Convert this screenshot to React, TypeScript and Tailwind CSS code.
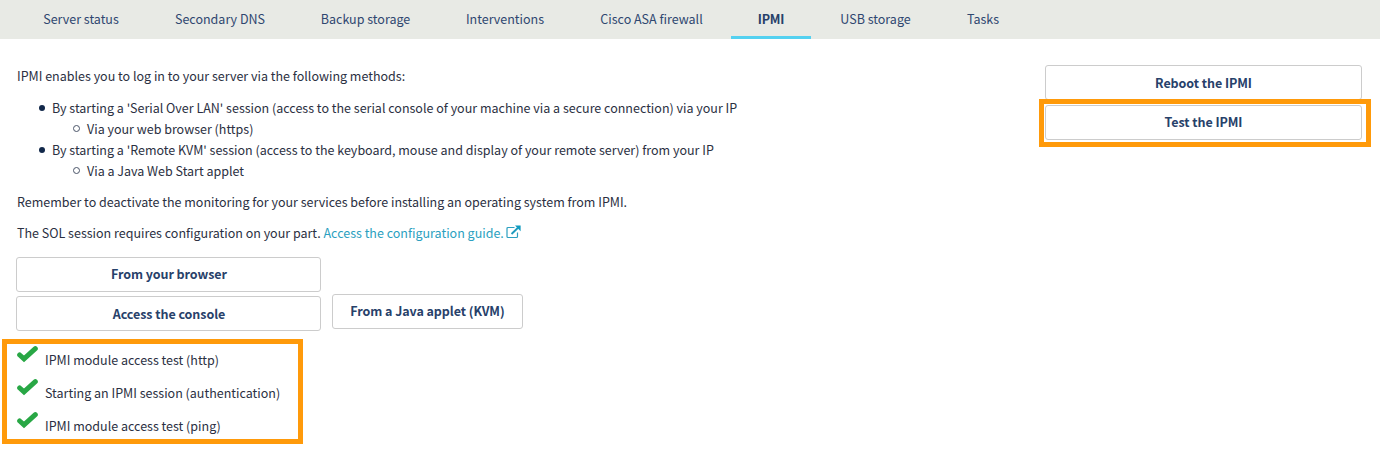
import type { ReactNode } from 'react';

const tabs = [
  { label: 'Server status', width: 'w-[132px]' },
  { label: 'Secondary DNS', width: 'w-[146px]' },
  { label: 'Backup storage', width: 'w-[145px]' },
  { label: 'Interventions', width: 'w-[134px]' },
  { label: 'Cisco ASA firewall', width: 'w-[159px]' },
  { label: 'IPMI', width: 'w-[80px]', active: true },
  { label: 'USB storage', width: 'w-[129px]' },
  { label: 'Tasks', width: 'w-[86px]' },
];

const methods = [
  {
    text: "By starting a 'Serial Over LAN' session (access to the serial console of your machine via a secure connection) via your IP",
    via: 'Via your web browser (https)',
  },
  {
    text: "By starting a 'Remote KVM' session (access to the keyboard, mouse and display of your remote server) from your IP",
    via: 'Via a Java Web Start applet',
  },
];

const tests = [
  'IPMI module access test (http)',
  'Starting an IPMI session (authentication)',
  'IPMI module access test (ping)',
];

function Button({ children, className = '' }: { children: ReactNode; className?: string }) {
  return (
    <button
      className={`flex h-[35px] shrink-0 items-center justify-center rounded-[3px] border border-[#cccccc] bg-white text-[12.5px] leading-5 font-bold tracking-[-0.06px] whitespace-nowrap text-[#27416a] ${className}`}
    >
      {children}
    </button>
  );
}

function Check() {
  return (
    <svg viewBox="0 0 21 17" className="h-[17px] w-[21px] shrink-0" fill="none">
      <path d="M2.7 9 L7 12.8 L18.3 2.7" stroke="#28a745" strokeWidth="5" strokeLinecap="round" />
    </svg>
  );
}

function ExternalLink() {
  return (
    <svg viewBox="0 0 15 14" className="ml-[2px] inline-block h-[14px] w-[15px] align-[-1px]" fill="none">
      <path d="M8.5 2.5H2A1 1 0 0 0 1 3.5V11.5A1 1 0 0 0 2 12.5H10.5A1 1 0 0 0 11.5 11.5V7.5" stroke="#2b9fc0" strokeWidth="1.2" />
      <path d="M5.5 9L12 2.8" stroke="#1d9abd" strokeWidth="1.9" />
      <path d="M9 0.6H14.6V6.2Z" fill="#109bc0" />
    </svg>
  );
}

export default function App() {
  return (
    <div className="h-[459px] w-[1380px] overflow-hidden bg-white font-['Noto_Sans_CJK_SC',sans-serif] text-[12.5px] text-[#2b3042]">
      <nav className="flex h-[39px] bg-[#e8eae5] pl-[15px] text-[#2f4770]">
        {tabs.map((t) => (
          <a
            key={t.label}
            className={`flex h-[39px] items-center justify-center border-b-[3px] pt-[2px] whitespace-nowrap ${t.width} ${t.active ? 'border-[#54d1f0] font-bold tracking-[-0.2px] text-[#27416a]' : 'border-transparent'}`}
          >
            {t.label}
          </a>
        ))}
      </nav>

      <div className="flex justify-between pr-[9px]">
        <main className="pt-[26px] leading-[21px]">
          <div className="pl-[17px] whitespace-nowrap">
            <p>IPMI enables you to log in to your server via the following methods:</p>
            <ul className="mt-[11px] pl-[22px]">
              {methods.map((m) => (
                <li key={m.text}>
                  <div className="flex h-[21px] items-center">
                    <span className="mr-[7px] size-[6px] rounded-full bg-[#12284a]" />
                    <span>{m.text}</span>
                  </div>
                  <ul className="pl-[34px]">
                    <li className="flex h-[21px] items-center">
                      <span className="mr-[7px] size-[7px] rounded-full border border-[#4a5468]" />
                      <span>{m.via}</span>
                    </li>
                  </ul>
                </li>
              ))}
            </ul>
            <p className="mt-[10px]">Remember to deactivate the monitoring for your services before installing an operating system from IPMI.</p>
            <p className="mt-[10px] h-[21px]">
              The SOL session requires configuration on your part. <a className="text-[#2b9fc0]">Access the configuration guide.<ExternalLink /></a>
            </p>
          </div>

          <div className="mt-[14px] flex items-end gap-[11px] pl-[16px]">
            <div className="flex w-[305px] flex-col gap-1">
              <Button className="pb-[2px] pl-px">From your browser</Button>
              <Button className="pl-px">Access the console</Button>
            </div>
            <Button className="mb-[2px] w-[191px] pb-[2px]">From a Java applet (KVM)</Button>
          </div>

          <ul className="mt-2 ml-[2px] flex h-[105px] w-[301px] flex-col border-[5px] border-[#ff9a0a] pt-[2px] pl-[10px]">
            {tests.map((t) => (
              <li key={t} className="flex h-[33px] shrink-0 items-start gap-[7px]">
                <Check />
                <span className="pt-[3px]">{t}</span>
              </li>
            ))}
          </ul>
        </main>

        <aside className="w-[332px] pt-[26px]">
          <Button className="ml-[6px] w-[317px]">Reboot the IPMI</Button>
          <div className="relative -mt-px h-[48px] border-[5px] border-[#ff9a0a] bg-white pt-px pl-px">
            <Button className="w-[317px] pb-[2px]">Test the IPMI</Button>
          </div>
        </aside>
      </div>
    </div>
  );
}
